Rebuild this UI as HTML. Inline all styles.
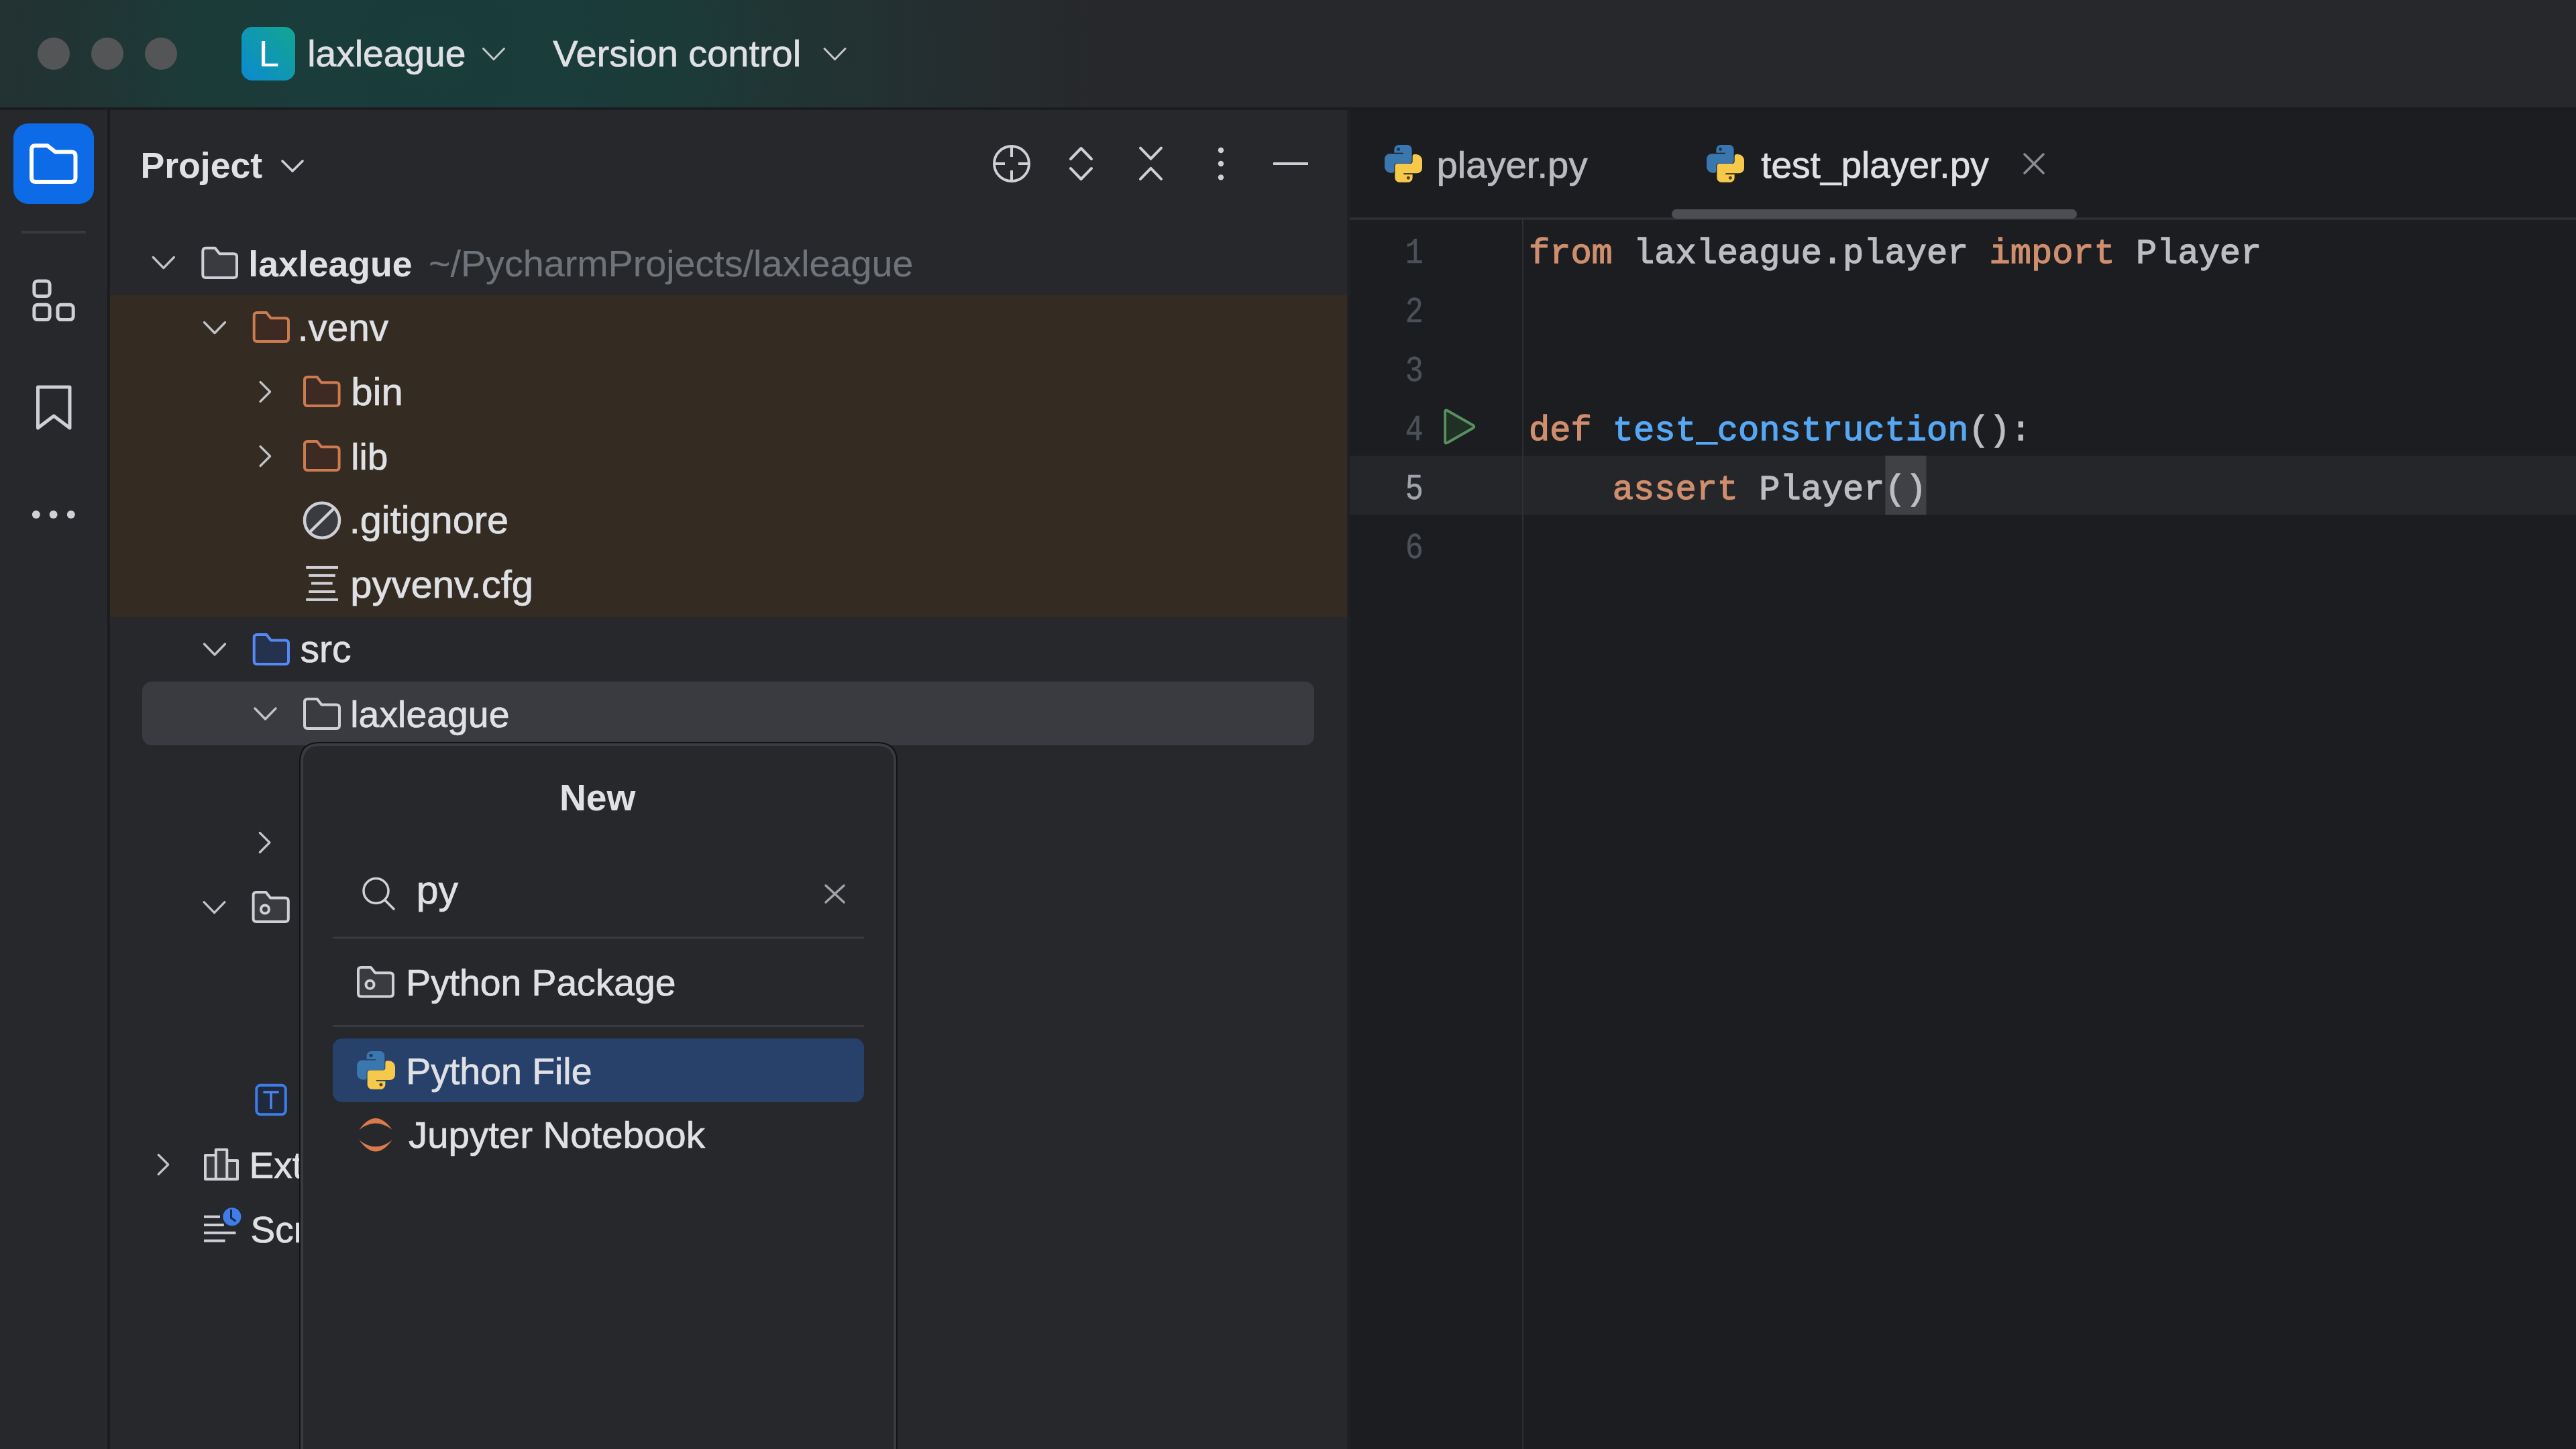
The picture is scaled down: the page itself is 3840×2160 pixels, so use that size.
<!DOCTYPE html><html><head><meta charset="utf-8"><title>PyCharm</title><style>html,body{margin:0;padding:0;width:3840px;height:2160px;overflow:hidden;background:#27282B;}</style></head><body><svg width="3840" height="2160" viewBox="0 0 3840 2160" font-family="Liberation Sans" style="display:block">
<defs><radialGradient id="tg" gradientUnits="userSpaceOnUse" cx="650" cy="80" r="1000"><stop offset="0" stop-color="#193D3B"/><stop offset="0.35" stop-color="#1B3B39"/><stop offset="0.55" stop-color="#213433"/><stop offset="0.8" stop-color="#252D2F"/><stop offset="1" stop-color="#27282B"/></radialGradient><linearGradient id="lg" x1="0" y1="1" x2="1" y2="0"><stop offset="0" stop-color="#0A8BCF"/><stop offset="1" stop-color="#14A592"/></linearGradient></defs>
<rect x="0" y="0" width="3840" height="160" fill="#27282B"/>
<rect x="0" y="0" width="3840" height="160" fill="url(#tg)"/>
<rect x="0" y="160" width="3840" height="4" fill="#1B1C1F"/>
<circle cx="80" cy="80" r="24" fill="#545557"/>
<circle cx="160" cy="80" r="24" fill="#545557"/>
<circle cx="240" cy="80" r="24" fill="#545557"/>
<rect x="360" y="40" width="80" height="80" rx="16" fill="url(#lg)"/>
<text x="385.5" y="99.4" font-size="55.00" fill="#FFFFFF" stroke="#FFFFFF" stroke-width="0" >L</text>
<text x="458.3" y="99.4" font-size="55.16" fill="#DFE1E5" stroke="#DFE1E5" stroke-width="0.7" >laxleague</text>
<polyline points="720.5,72.5 736.0,88.5 751.5,72.5" fill="none" stroke="#C5C7CC" stroke-width="3" stroke-linecap="round" stroke-linejoin="round"/>
<text x="824.3" y="99.4" font-size="55.92" fill="#DFE1E5" stroke="#DFE1E5" stroke-width="0.7" >Version control</text>
<polyline points="1229.0,72.5 1244.5,88.5 1260.0,72.5" fill="none" stroke="#C5C7CC" stroke-width="3" stroke-linecap="round" stroke-linejoin="round"/>
<rect x="0" y="164" width="160" height="1996" fill="#27282B"/>
<rect x="160" y="164" width="4" height="1996" fill="#1B1C1F"/>
<rect x="20" y="184" width="120" height="120" rx="22" fill="#0D6BE8"/>
<path d="M47.0,223.0 Q47.0,217.0 53.0,217.0 L70.6,217.0 L82.4,226.4 L106.5,226.4 Q112.5,226.4 112.5,232.4 L112.5,265.0 Q112.5,271.0 106.5,271.0 L53.0,271.0 Q47.0,271.0 47.0,265.0 Z" fill="none" stroke="#FFFFFF" stroke-width="6" stroke-linejoin="round"/>
<rect x="32" y="344" width="96" height="4" fill="#393A3E"/>
<rect x="50.9" y="419.0" width="23.2" height="22.4" rx="5" fill="none" stroke="#CED0D6" stroke-width="5"/>
<rect x="50.9" y="454.2" width="23.2" height="22.4" rx="5" fill="none" stroke="#CED0D6" stroke-width="5"/>
<rect x="86.0" y="454.2" width="23.2" height="22.4" rx="5" fill="none" stroke="#CED0D6" stroke-width="5"/>
<path d="M56.5,638 L56.5,577 L104,577 L104,638 L80.2,620 Z" fill="none" stroke="#CED0D6" stroke-width="5" stroke-linejoin="round"/>
<circle cx="53.8" cy="767" r="6" fill="#CED0D6"/>
<circle cx="79.6" cy="767" r="6" fill="#CED0D6"/>
<circle cx="105.8" cy="767" r="6" fill="#CED0D6"/>
<rect x="164" y="164" width="1844" height="1996" fill="#27282B"/>
<text x="209.4" y="264.5" font-size="53.64" font-weight="700" fill="#DFE1E5" stroke="#DFE1E5" stroke-width="0.0" >Project</text>
<polyline points="421.0,240.0 436.0,255.0 451.0,240.0" fill="none" stroke="#CED0D6" stroke-width="3.5" stroke-linecap="round" stroke-linejoin="round"/>
<circle cx="1508" cy="244" r="26" fill="none" stroke="#CED0D6" stroke-width="4"/>
<path d="M1508,217 V234 M1508,254 V271 M1481,244 H1498 M1518,244 H1535" stroke="#CED0D6" stroke-width="4"/>
<polyline points="1596.0,237.0 1611.5,221.0 1627.0,237.0" fill="none" stroke="#CED0D6" stroke-width="4" stroke-linecap="round" stroke-linejoin="round"/>
<polyline points="1596.0,251.0 1611.5,267.0 1627.0,251.0" fill="none" stroke="#CED0D6" stroke-width="4" stroke-linecap="round" stroke-linejoin="round"/>
<polyline points="1700.0,220.7 1715.5,236.7 1731.0,220.7" fill="none" stroke="#CED0D6" stroke-width="4" stroke-linecap="round" stroke-linejoin="round"/>
<polyline points="1700.0,266.8 1715.5,250.8 1731.0,266.8" fill="none" stroke="#CED0D6" stroke-width="4" stroke-linecap="round" stroke-linejoin="round"/>
<circle cx="1820" cy="224" r="4.2" fill="#CED0D6"/>
<circle cx="1820" cy="244" r="4.2" fill="#CED0D6"/>
<circle cx="1820" cy="264.4" r="4.2" fill="#CED0D6"/>
<rect x="1898" y="242" width="52" height="4" fill="#CED0D6"/>
<rect x="164" y="440" width="1844" height="480" fill="#342B22"/>
<rect x="212" y="1016" width="1747" height="95" rx="14" fill="#393B40"/>
<polyline points="228.3,383.5 243.8,399.5 259.3,383.5" fill="none" stroke="#C2C4C9" stroke-width="3.3" stroke-linecap="round" stroke-linejoin="round"/>
<path d="M302.3,374.3 Q302.3,369.8 306.8,369.8 L320.6,369.8 L327.3,378.2 L348.5,378.2 Q353.0,378.2 353.0,382.7 L353.0,409.5 Q353.0,414.0 348.5,414.0 L306.8,414.0 Q302.3,414.0 302.3,409.5 Z" fill="#3A3B40" stroke="#CED0D6" stroke-width="4" stroke-linejoin="round"/>
<text x="370.3" y="411.5" font-size="53.57" font-weight="700" fill="#DFE1E5" stroke="#DFE1E5" stroke-width="0.0" >laxleague</text>
<text x="639.0" y="411.5" font-size="55.67" fill="#6F737A" stroke="#6F737A" stroke-width="0.2" >~/PycharmProjects/laxleague</text>
<polyline points="304.5,480.5 320.0,496.5 335.5,480.5" fill="none" stroke="#C2C4C9" stroke-width="3.3" stroke-linecap="round" stroke-linejoin="round"/>
<path d="M378.7,470.5 Q378.7,466.0 383.2,466.0 L397.2,466.0 L403.7,474.2 L425.5,474.2 Q430.0,474.2 430.0,478.7 L430.0,504.5 Q430.0,509.0 425.5,509.0 L383.2,509.0 Q378.7,509.0 378.7,504.5 Z" fill="#3C2A23" stroke="#CB7A51" stroke-width="4" stroke-linejoin="round"/>
<text x="443.8" y="507.8" font-size="56.63" fill="#DFE1E5" stroke="#DFE1E5" stroke-width="0.7" >.venv</text>
<polyline points="388.1,569.5 402.6,584.0 388.1,598.5" fill="none" stroke="#C2C4C9" stroke-width="3.2" stroke-linecap="round" stroke-linejoin="round"/>
<path d="M454.0,566.5 Q454.0,562.0 458.5,562.0 L472.6,562.0 L479.1,570.2 L501.1,570.2 Q505.6,570.2 505.6,574.7 L505.6,600.5 Q505.6,605.0 501.1,605.0 L458.5,605.0 Q454.0,605.0 454.0,600.5 Z" fill="#3C2A23" stroke="#CB7A51" stroke-width="4" stroke-linejoin="round"/>
<polyline points="388.1,665.5 402.6,680.0 388.1,694.5" fill="none" stroke="#C2C4C9" stroke-width="3.2" stroke-linecap="round" stroke-linejoin="round"/>
<path d="M454.0,662.5 Q454.0,658.0 458.5,658.0 L472.6,658.0 L479.1,666.2 L501.1,666.2 Q505.6,666.2 505.6,670.7 L505.6,696.5 Q505.6,701.0 501.1,701.0 L458.5,701.0 Q454.0,701.0 454.0,696.5 Z" fill="#3C2A23" stroke="#CB7A51" stroke-width="4" stroke-linejoin="round"/>
<text x="523.3" y="604.0" font-size="58.09" fill="#DFE1E5" stroke="#DFE1E5" stroke-width="0.7" >bin</text>
<text x="523.3" y="700.0" font-size="55.00" fill="#DFE1E5" stroke="#DFE1E5" stroke-width="0.7" >lib</text>
<circle cx="480" cy="775.8" r="26" fill="#3A3B40" stroke="#CED0D6" stroke-width="4.5"/>
<line x1="462" y1="793" x2="498" y2="757.6" stroke="#CED0D6" stroke-width="4.5"/>
<text x="520.7" y="794.6" font-size="57.72" fill="#DFE1E5" stroke="#DFE1E5" stroke-width="0.7" >.gitignore</text>
<rect x="456.2" y="843.9" width="47.8" height="4" fill="#CED0D6"/>
<rect x="460.2" y="855.9" width="39.6" height="4" fill="#CED0D6"/>
<rect x="464" y="867.6" width="31.7" height="4" fill="#CED0D6"/>
<rect x="460.2" y="880.0" width="39.6" height="4" fill="#CED0D6"/>
<rect x="456.2" y="891.9" width="47.8" height="4" fill="#CED0D6"/>
<text x="522.3" y="891.0" font-size="57.94" fill="#DFE1E5" stroke="#DFE1E5" stroke-width="0.7" >pyvenv.cfg</text>
<polyline points="304.5,960.0 320.0,976.0 335.5,960.0" fill="none" stroke="#C2C4C9" stroke-width="3.3" stroke-linecap="round" stroke-linejoin="round"/>
<path d="M378.7,950.5 Q378.7,946.0 383.2,946.0 L397.2,946.0 L403.9,954.4 L425.5,954.4 Q430.0,954.4 430.0,958.9 L430.0,985.5 Q430.0,990.0 425.5,990.0 L383.2,990.0 Q378.7,990.0 378.7,985.5 Z" fill="#25324D" stroke="#548AF7" stroke-width="4" stroke-linejoin="round"/>
<text x="447.4" y="987.0" font-size="57.08" fill="#DFE1E5" stroke="#DFE1E5" stroke-width="0.7" >src</text>
<polyline points="380.0,1056.0 395.5,1072.0 411.0,1056.0" fill="none" stroke="#C2C4C9" stroke-width="3.3" stroke-linecap="round" stroke-linejoin="round"/>
<path d="M454.0,1046.5 Q454.0,1042.0 458.5,1042.0 L472.7,1042.0 L479.4,1050.4 L501.5,1050.4 Q506.0,1050.4 506.0,1054.9 L506.0,1081.5 Q506.0,1086.0 501.5,1086.0 L458.5,1086.0 Q454.0,1086.0 454.0,1081.5 Z" fill="none" stroke="#CED0D6" stroke-width="4" stroke-linejoin="round"/>
<text x="522.3" y="1083.5" font-size="55.40" fill="#DFE1E5" stroke="#DFE1E5" stroke-width="0.7" >laxleague</text>
<polyline points="387.4,1241.5 401.9,1256.0 387.4,1270.5" fill="none" stroke="#C2C4C9" stroke-width="3.2" stroke-linecap="round" stroke-linejoin="round"/>
<polyline points="304.0,1344.7 319.5,1360.7 335.0,1344.7" fill="none" stroke="#C2C4C9" stroke-width="3.3" stroke-linecap="round" stroke-linejoin="round"/>
<path d="M377.6,1334.5 Q377.6,1330.0 382.1,1330.0 L396.4,1330.0 L403.1,1338.4 L425.3,1338.4 Q429.8,1338.4 429.8,1342.9 L429.8,1369.5 Q429.8,1374.0 425.3,1374.0 L382.1,1374.0 Q377.6,1374.0 377.6,1369.5 Z" fill="#3A3B40" stroke="#CED0D6" stroke-width="4" stroke-linejoin="round"/>
<circle cx="395" cy="1355.5" r="6" fill="none" stroke="#CED0D6" stroke-width="4"/>
<rect x="382.3" y="1617.8" width="43.5" height="43.5" rx="6" fill="#1F2A3D" stroke="#3D7EEA" stroke-width="4"/>
<path d="M392.4,1628 H415.7 M404,1628 V1653" stroke="#4A86EC" stroke-width="3.5"/>
<polyline points="236.2,1721.5 250.7,1736.0 236.2,1750.5" fill="none" stroke="#C2C4C9" stroke-width="3.2" stroke-linecap="round" stroke-linejoin="round"/>
<path d="M306,1757.8 V1722 H321.8 V1713.8 H338.3 V1730 H354 V1757.8 Z M321.8,1722 V1757.8 M338.3,1730 V1757.8" fill="#3A3B40" stroke="#CED0D6" stroke-width="4" stroke-linejoin="round"/>
<text x="371.5" y="1755.5" font-size="55.00" fill="#DFE1E5" stroke="#DFE1E5" stroke-width="0.7" >Ext</text>
<rect x="304" y="1811.8" width="24.0" height="4" fill="#CED0D6"/>
<rect x="304" y="1824.0" width="29.8" height="4" fill="#CED0D6"/>
<rect x="304" y="1835.8" width="47.5" height="4" fill="#CED0D6"/>
<rect x="304" y="1847.6" width="31.6" height="4" fill="#CED0D6"/>
<circle cx="345.9" cy="1813.8" r="15" fill="#27282B"/>
<circle cx="345.9" cy="1813.8" r="13.5" fill="#3D7EEA"/>
<path d="M344.5,1803 V1815.5 L351.5,1820.5" fill="none" stroke="#1B2A44" stroke-width="3"/>
<text x="373.5" y="1851.8" font-size="55.00" fill="#DFE1E5" stroke="#DFE1E5" stroke-width="0.7" >Scr</text>
<rect x="2008" y="164" width="4" height="1996" fill="#202124"/>
<rect x="2012" y="164" width="1828" height="1996" fill="#1C1D20"/>
<rect x="2012" y="324" width="1828" height="4" fill="#2D2E32"/>
<path d="M2078.35,222.65 A6.65,6.65 0 0 1 2085.00,216.00 L2097.95,216.00 A6.65,6.65 0 0 1 2104.60,222.65 L2104.60,239.80 A3.85,3.85 0 0 1 2100.75,243.65 L2082.20,243.65 A3.85,3.85 0 0 0 2078.35,247.50 L2078.35,254.50 A3.15,3.15 0 0 1 2075.20,257.65 L2073.10,257.65 A9.10,9.10 0 0 1 2064.00,248.55 L2064.00,237.00 A7.70,7.70 0 0 1 2071.70,229.30 L2091.65,229.30 L2091.65,227.72 L2078.35,227.72 Z" fill="#3A77AF"/>
<path d="M2078.35,222.65 A6.65,6.65 0 0 1 2085.00,216.00 L2097.95,216.00 A6.65,6.65 0 0 1 2104.60,222.65 L2104.60,239.80 A3.85,3.85 0 0 1 2100.75,243.65 L2082.20,243.65 A3.85,3.85 0 0 0 2078.35,247.50 L2078.35,254.50 A3.15,3.15 0 0 1 2075.20,257.65 L2073.10,257.65 A9.10,9.10 0 0 1 2064.00,248.55 L2064.00,237.00 A7.70,7.70 0 0 1 2071.70,229.30 L2091.65,229.30 L2091.65,227.72 L2078.35,227.72 Z" fill="#F6C94A" transform="rotate(180 2092.00 243.82)"/>
<circle cx="2084.65" cy="222.47" r="2.45" fill="#1D3550"/>
<circle cx="2099.35" cy="265.18" r="2.45" fill="#5A3A14"/>
<text x="2141.4" y="265.0" font-size="56.25" fill="#B9BBC0" stroke="#B9BBC0" stroke-width="0.7" >player.py</text>
<path d="M2558.35,222.65 A6.65,6.65 0 0 1 2565.00,216.00 L2577.95,216.00 A6.65,6.65 0 0 1 2584.60,222.65 L2584.60,239.80 A3.85,3.85 0 0 1 2580.75,243.65 L2562.20,243.65 A3.85,3.85 0 0 0 2558.35,247.50 L2558.35,254.50 A3.15,3.15 0 0 1 2555.20,257.65 L2553.10,257.65 A9.10,9.10 0 0 1 2544.00,248.55 L2544.00,237.00 A7.70,7.70 0 0 1 2551.70,229.30 L2571.65,229.30 L2571.65,227.72 L2558.35,227.72 Z" fill="#3A77AF"/>
<path d="M2558.35,222.65 A6.65,6.65 0 0 1 2565.00,216.00 L2577.95,216.00 A6.65,6.65 0 0 1 2584.60,222.65 L2584.60,239.80 A3.85,3.85 0 0 1 2580.75,243.65 L2562.20,243.65 A3.85,3.85 0 0 0 2558.35,247.50 L2558.35,254.50 A3.15,3.15 0 0 1 2555.20,257.65 L2553.10,257.65 A9.10,9.10 0 0 1 2544.00,248.55 L2544.00,237.00 A7.70,7.70 0 0 1 2551.70,229.30 L2571.65,229.30 L2571.65,227.72 L2558.35,227.72 Z" fill="#F6C94A" transform="rotate(180 2572.00 243.82)"/>
<circle cx="2564.65" cy="222.47" r="2.45" fill="#1D3550"/>
<circle cx="2579.35" cy="265.18" r="2.45" fill="#5A3A14"/>
<text x="2625.2" y="265.0" font-size="55.04" fill="#DFE1E5" stroke="#DFE1E5" stroke-width="0.7" >test_player.py</text>
<path d="M3018,230 L3046,258 M3046,230 L3018,258" stroke="#8A8D93" stroke-width="3.5" stroke-linecap="round"/>
<rect x="2492" y="312" width="604" height="14" rx="7" fill="#4C4E53"/>
<rect x="2012" y="679.5" width="1828" height="88" fill="#25262A"/>
<rect x="2269" y="328" width="2" height="1832" fill="#2F3034"/>
<text transform="translate(2121.8 391.5) scale(0.87 1.03)" x="0" y="0" font-family="Liberation Mono" font-size="52" fill="#4B5059" stroke="#4B5059" stroke-width="0.5" text-anchor="end">1</text>
<text transform="translate(2121.8 479.5) scale(0.87 1.03)" x="0" y="0" font-family="Liberation Mono" font-size="52" fill="#4B5059" stroke="#4B5059" stroke-width="0.5" text-anchor="end">2</text>
<text transform="translate(2121.8 567.5) scale(0.87 1.03)" x="0" y="0" font-family="Liberation Mono" font-size="52" fill="#4B5059" stroke="#4B5059" stroke-width="0.5" text-anchor="end">3</text>
<text transform="translate(2121.8 655.5) scale(0.87 1.03)" x="0" y="0" font-family="Liberation Mono" font-size="52" fill="#4B5059" stroke="#4B5059" stroke-width="0.5" text-anchor="end">4</text>
<text transform="translate(2121.8 743.5) scale(0.87 1.03)" x="0" y="0" font-family="Liberation Mono" font-size="52" fill="#A1A3AB" stroke="#A1A3AB" stroke-width="0.5" text-anchor="end">5</text>
<text transform="translate(2121.8 831.5) scale(0.87 1.03)" x="0" y="0" font-family="Liberation Mono" font-size="52" fill="#4B5059" stroke="#4B5059" stroke-width="0.5" text-anchor="end">6</text>
<path d="M2154.2,613.5 Q2154.2,610 2157.5,612 L2196,634 Q2199,636 2196,638 L2157.5,660 Q2154.2,662 2154.2,658.5 Z" fill="#1F3024" stroke="#57915F" stroke-width="3.8" stroke-linejoin="round"/>
<rect x="2810.5" y="679.5" width="61" height="88" fill="#3F4145"/>
<text x="2279.0" y="391.5" font-family="Liberation Mono" font-size="52" stroke-width="1.3" xml:space="preserve"><tspan fill="#CF8E6D" stroke="#CF8E6D">from</tspan><tspan fill="#BCBEC4" stroke="#BCBEC4"> laxleague.player </tspan><tspan fill="#CF8E6D" stroke="#CF8E6D">import</tspan><tspan fill="#BCBEC4" stroke="#BCBEC4"> Player</tspan></text>
<text x="2279.0" y="655.5" font-family="Liberation Mono" font-size="52" stroke-width="1.3" xml:space="preserve"><tspan fill="#CF8E6D" stroke="#CF8E6D">def</tspan><tspan fill="#BCBEC4" stroke="#BCBEC4"> </tspan><tspan fill="#56A8F5" stroke="#56A8F5">test_construction</tspan><tspan fill="#BCBEC4" stroke="#BCBEC4">():</tspan></text>
<text x="2279.0" y="743.5" font-family="Liberation Mono" font-size="52" stroke-width="1.3" xml:space="preserve"><tspan fill="#BCBEC4" stroke="#BCBEC4">    </tspan><tspan fill="#CF8E6D" stroke="#CF8E6D">assert</tspan><tspan fill="#BCBEC4" stroke="#BCBEC4"> Player()</tspan></text>
<path d="M446,2170 V1136 Q446,1106 476,1106 H1308 Q1338,1106 1338,1136 V2170 Z" fill="#111214"/>
<path d="M448,2170 V1136 Q448,1108 476,1108 H1308 Q1336,1108 1336,1136 V2170 Z" fill="#393B40"/>
<path d="M452,2170 V1136 Q452,1112 476,1112 H1308 Q1332,1112 1332,1136 V2170 Z" fill="#27282B"/>
<text x="833.9" y="1208.0" font-size="55.19" font-weight="700" fill="#DFE1E5" stroke="#DFE1E5" stroke-width="0.0" >New</text>
<circle cx="560.5" cy="1328" r="18.5" fill="none" stroke="#CED0D6" stroke-width="3.5"/>
<line x1="574" y1="1342" x2="587" y2="1355" stroke="#CED0D6" stroke-width="3.5" stroke-linecap="round"/>
<text x="620.8" y="1346.6" font-size="59.01" fill="#DFE1E5" stroke="#DFE1E5" stroke-width="0.7" >py</text>
<path d="M1231,1320 L1258,1345 M1258,1320 L1231,1345" stroke="#A0A3A8" stroke-width="3.5" stroke-linecap="round"/>
<rect x="496" y="1396.5" width="792" height="3" fill="#393B40"/>
<path d="M534.0,1446.5 Q534.0,1442.0 538.5,1442.0 L552.7,1442.0 L559.3,1450.3 L581.5,1450.3 Q586.0,1450.3 586.0,1454.8 L586.0,1481.1 Q586.0,1485.6 581.5,1485.6 L538.5,1485.6 Q534.0,1485.6 534.0,1481.1 Z" fill="#3A3B40" stroke="#CED0D6" stroke-width="4" stroke-linejoin="round"/>
<circle cx="551.5" cy="1467.7" r="6" fill="none" stroke="#CED0D6" stroke-width="4"/>
<text x="605.3" y="1484.0" font-size="55.22" fill="#DFE1E5" stroke="#DFE1E5" stroke-width="0.7" >Python Package</text>
<rect x="496" y="1528" width="792" height="3" fill="#393B40"/>
<rect x="496" y="1548" width="792" height="95" rx="14" fill="#27416B"/>
<path d="M546.61,1573.77 A6.77,6.77 0 0 1 553.38,1567.00 L566.56,1567.00 A6.77,6.77 0 0 1 573.33,1573.77 L573.33,1591.22 A3.92,3.92 0 0 1 569.41,1595.14 L550.52,1595.14 A3.92,3.92 0 0 0 546.61,1599.06 L546.61,1606.19 A3.21,3.21 0 0 1 543.40,1609.39 L541.26,1609.39 A9.26,9.26 0 0 1 532.00,1600.13 L532.00,1588.38 A7.84,7.84 0 0 1 539.84,1580.54 L560.14,1580.54 L560.14,1578.93 L546.61,1578.93 Z" fill="#3A77AF"/>
<path d="M546.61,1573.77 A6.77,6.77 0 0 1 553.38,1567.00 L566.56,1567.00 A6.77,6.77 0 0 1 573.33,1573.77 L573.33,1591.22 A3.92,3.92 0 0 1 569.41,1595.14 L550.52,1595.14 A3.92,3.92 0 0 0 546.61,1599.06 L546.61,1606.19 A3.21,3.21 0 0 1 543.40,1609.39 L541.26,1609.39 A9.26,9.26 0 0 1 532.00,1600.13 L532.00,1588.38 A7.84,7.84 0 0 1 539.84,1580.54 L560.14,1580.54 L560.14,1578.93 L546.61,1578.93 Z" fill="#F6C94A" transform="rotate(180 560.50 1595.32)"/>
<circle cx="553.02" cy="1573.59" r="2.49" fill="#1D3550"/>
<circle cx="567.98" cy="1617.05" r="2.49" fill="#5A3A14"/>
<text x="605.3" y="1616.0" font-size="55.41" fill="#DFE1E5" stroke="#DFE1E5" stroke-width="0.7" >Python File</text>
<path d="M535.5,1684 Q560,1650 584.5,1684 Q560,1665 535.5,1684 Z" fill="#DB7B4C"/>
<path d="M535.5,1699.5 Q560,1733.5 584.5,1699.5 Q560,1719 535.5,1699.5 Z" fill="#DB7B4C"/>
<text x="609.1" y="1710.5" font-size="56.37" fill="#DFE1E5" stroke="#DFE1E5" stroke-width="0.7" >Jupyter Notebook</text>
</svg></body></html>
